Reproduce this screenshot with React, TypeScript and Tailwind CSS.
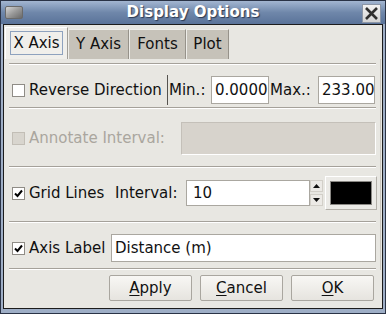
import React from 'react';

function CheckBox({ checked, disabled }: { checked?: boolean; disabled?: boolean }) {
  return (
    <div
      className={`w-[13px] h-[13px] shrink-0 border flex items-center justify-center ${
        disabled ? 'border-[#c2beb6] bg-[#d8d5ce]' : 'border-[#8f8c86] bg-white'
      }`}
    >
      {checked && (
        <svg width="11" height="11" viewBox="0 0 11 11">
          <path d="M2 5.5 L4.5 8 L9 2.5" fill="none" stroke="#000" strokeWidth="2" />
        </svg>
      )}
    </div>
  );
}

function Entry({ value, width }: { value: string; width: string }) {
  return (
    <div
      className={`${width} h-[28px] shrink-0 bg-white border border-[#aaa7a0] overflow-hidden whitespace-nowrap flex items-center pl-[3px] text-[15px] text-[#111]`}
    >
      <span className="block overflow-hidden">{value}</span>
    </div>
  );
}

function Separator() {
  return <div className="mx-[4px] h-[2px] border-t border-b border-t-[#a5a19a] border-b-white" />;
}

function DialogButton({ accel, rest }: { accel: string; rest: string }) {
  return (
    <button className="w-[83px] h-[26px] rounded-[2px] border border-[#a9a69f] bg-gradient-to-b from-[#f8f7f4] to-[#e6e4df] text-[15px] text-[#111] flex items-center justify-center">
      <span className="underline underline-offset-2">{accel}</span>
      {rest}
    </button>
  );
}

export default function App() {
  return (
    <div className="w-[386px] h-[314px] flex flex-col bg-[#9eaec6] font-['DejaVu_Sans',sans-serif] overflow-hidden">
      {/* title bar */}
      <div className="h-[24px] shrink-0 relative flex items-center justify-center bg-gradient-to-b from-[#a3b6d1] via-[#6f87aa] to-[#5a7399] border-x border-t border-[#2a3346]">
        <div className="absolute left-[4px] top-[5px] w-[18px] h-[13px] rounded-[2px] border border-[#6a6a6a] bg-gradient-to-br from-[#d6d6d6] via-[#9a9a9a] to-[#6a6a6a]" />
        <span className="text-white font-bold text-[15px] [text-shadow:1px_1px_1px_#2c3a52]">Display Options</span>
        <div className="absolute right-[4px] top-[3px] w-[19px] h-[19px] border border-[#8c96a6] bg-gradient-to-b from-[#f2f2f2] to-[#d4d4d4] flex items-center justify-center">
          <svg width="15" height="15" viewBox="0 0 15 15">
            <path d="M2 2 L13 13 M13 2 L2 13" stroke="#2f2f2f" strokeWidth="2.6" />
          </svg>
        </div>
      </div>

      {/* window frame */}
      <div className="flex-1 flex flex-col border-x border-b border-[#2a3346] px-[2px] pb-[4px]">
        <div className="flex-1 flex flex-col border border-[#1c1c1c] bg-[#e8e7e2] text-[#111] text-[15px]">
          {/* tabs */}
          <div className="mt-[2px] h-[32px] flex items-end pl-[1px] shrink-0">
            <div className="w-[63px] h-[32px] bg-[#f0efeb] border-t border-l border-white border-r border-r-[#a19e97] flex pt-[3px] px-[4px] pb-[4px]">
              <div className="flex-1 border border-[#8ea2be] flex items-center justify-center">X Axis</div>
            </div>
            <div className="w-[61px] h-[30px] bg-[#c6c2b9] border-t border-l border-[#eeede9] border-r border-r-[#96928a] flex items-center justify-center">
              Y Axis
            </div>
            <div className="w-[57px] h-[30px] bg-[#c6c2b9] border-t border-l border-[#eeede9] border-r border-r-[#96928a] flex items-center justify-center">
              Fonts
            </div>
            <div className="w-[43px] h-[30px] bg-[#c6c2b9] border-t border-l border-[#eeede9] border-r border-r-[#96928a] flex items-center justify-center">
              Plot
            </div>
          </div>

          {/* tab panel */}
          <div className="h-[211px] shrink-0 flex flex-col pt-[4px] mx-[1px] border-r border-r-[#c9c6bf]">
            <Separator />

            {/* row 1 */}
            <div className="h-[42px] pt-[11px] flex items-start">
              <div className="h-[28px] flex items-center">
                <div className="ml-[7px] mr-[4px]">
                  <CheckBox />
                </div>
                <span className="w-[138px] whitespace-nowrap">Reverse Direction</span>
                <div className="w-px h-[30px] bg-[#55534f] mr-[1px]" />
                <span className="w-[42px] whitespace-nowrap">Min.:</span>
                <Entry value="0.000000" width="w-[58px]" />
                <span className="w-[49px] pl-[1px] whitespace-nowrap">Max.:</span>
                <Entry value="233.000000" width="w-[57px]" />
              </div>
            </div>
            <Separator />

            {/* row 2 */}
            <div className="h-[57px] pt-[13px] flex items-start">
              <div className="h-[33px] flex items-center">
                <div className="ml-[7px] mr-[4px]">
                  <CheckBox disabled />
                </div>
                <span className="w-[152px] whitespace-nowrap text-[#aaa69e]">Annotate Interval:</span>
                <div className="w-[195px] h-[33px] bg-[#d7d3cc] border border-t-[#c4c0b9] border-l-[#c4c0b9] border-b-white border-r-white" />
              </div>
            </div>
            <Separator />

            {/* row 3 */}
            <div className="h-[53px] pt-[8px] flex items-start">
              <div className="h-[34px] flex items-center">
                <div className="ml-[7px] mr-[4px]">
                  <CheckBox checked />
                </div>
                <span className="w-[86px] whitespace-nowrap">Grid Lines</span>
                <span className="w-[71px] whitespace-nowrap">Interval:</span>
                <div className="w-[124px] h-[26px] bg-white border border-[#aaa7a0] flex items-center pl-[6px]">10</div>
                <div className="w-[13px] h-[26px] flex flex-col justify-between">
                  <div className="h-[12px] border border-[#d2cfc8] bg-[#eceae6] flex items-center justify-center">
                    <svg width="7" height="4" viewBox="0 0 7 4">
                      <path d="M3.5 0 L7 4 L0 4 Z" fill="#111" />
                    </svg>
                  </div>
                  <div className="h-[12px] border border-[#d2cfc8] bg-[#eceae6] flex items-center justify-center">
                    <svg width="7" height="4" viewBox="0 0 7 4">
                      <path d="M0 0 L7 0 L3.5 4 Z" fill="#111" />
                    </svg>
                  </div>
                </div>
                <div className="ml-[2px] w-[52px] h-[34px] border border-t-white border-l-white border-b-[#b3b0a9] border-r-[#b3b0a9] bg-[#ebeae6] flex items-center justify-center">
                  <div className="w-[42px] h-[24px] bg-black border border-[#8a8884]" />
                </div>
              </div>
            </div>
            <Separator />

            {/* row 4 */}
            <div className="h-[45px] pt-[11px] flex items-start">
              <div className="h-[28px] flex items-center">
                <div className="ml-[7px] mr-[4px]">
                  <CheckBox checked />
                </div>
                <span className="w-[82px] whitespace-nowrap">Axis Label</span>
                <Entry value="Distance (m)" width="w-[265px]" />
              </div>
            </div>
            <Separator />
          </div>

          {/* buttons */}
          <div className="flex justify-end gap-[8px] pr-[8px] pt-[5px]">
            <DialogButton accel="A" rest="pply" />
            <DialogButton accel="C" rest="ancel" />
            <DialogButton accel="O" rest="K" />
          </div>
        </div>
      </div>
    </div>
  );
}
